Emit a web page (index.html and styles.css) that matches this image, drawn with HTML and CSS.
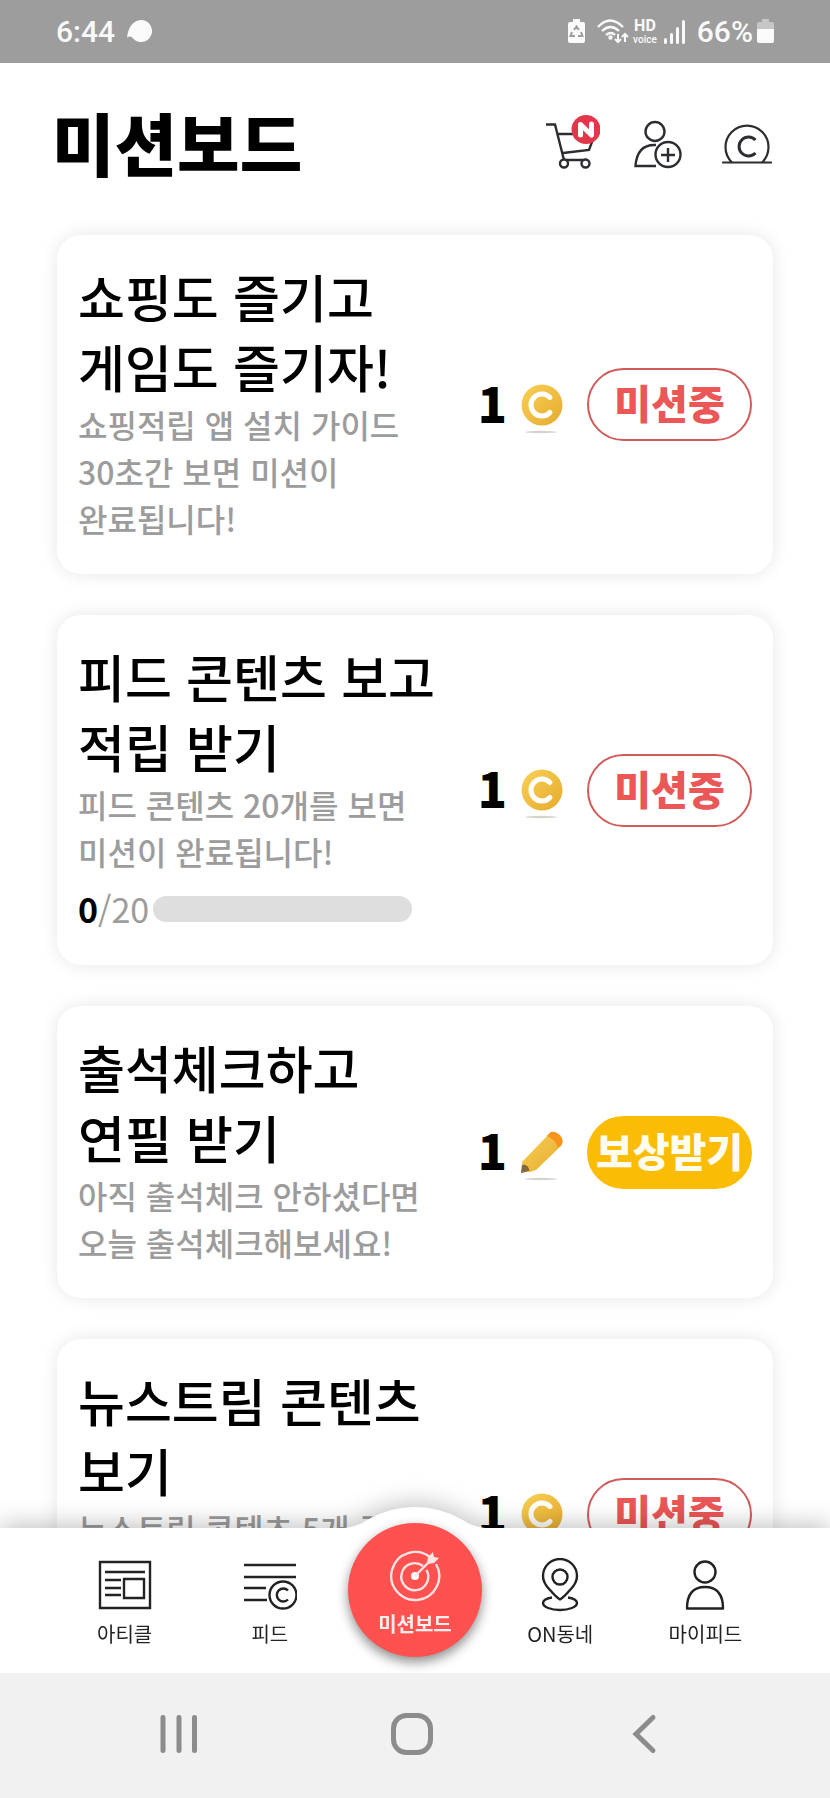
FILE: index.html
```html
<!DOCTYPE html>
<html lang="ko">
<head>
    <meta charset="UTF-8">
    <meta name="viewport" content="width=device-width,initial-scale=1.0">
    <title>미션보드</title>
    <link rel="stylesheet" href="styles.css">
</head>
<body>
    <!-- Shared icons -->
    <svg class="defs" width="0" height="0" aria-hidden="true">
        <defs>
            <linearGradient id="gold" x1="0" y1="0" x2="1" y2="1">
                <stop offset="0" stop-color="#f8d055"/>
                <stop offset="1" stop-color="#e6ab2e"/>
            </linearGradient>
        </defs>
        <symbol id="coin" viewBox="0 -8 42 58">
            <circle cx="21" cy="21" r="20.5" fill="url(#gold)"/>
            <path d="M29 13.500a11 11 0 1 0 0 15" fill="none" stroke="#fff" stroke-width="5" stroke-linecap="round"/>
            <ellipse cx="20" cy="48" rx="16" ry="1.200" fill="#d6d3cd"/>
        </symbol>
        <symbol id="pencil" viewBox="0 -8 42 58">
            <path d="M1 31 28 3 41 14 15 39 9 41 1 41Z" fill="url(#gold)"/>
            <path d="M26 5 29 1.500Q33-1 39 4 43 9 41 13L37 17Q34 8 26 5Z" fill="#f7941e"/>
            <path d="M1 34Q7 33 8.500 39.500L1 42Q0 42 0 41Z" fill="#85683c"/>
            <ellipse cx="20" cy="48" rx="16" ry="1.200" fill="#d6d3cd"/>
        </symbol>
    </svg>

    <div class="status-bar">
        <div class="status-group">
            <span>6:44</span>
            <svg width="25" height="23" viewBox="0 0 25 23"><path d="M14 0a11 11 0 1 1-8 18.500Q4 15 0 17.500 2 1 14 0Z" fill="#fafafa"/></svg>
        </div>
        <div class="status-group">
            <svg width="17" height="25" viewBox="0 0 17 25">
                <path d="M5 0h7v3h3q2 0 2 2v17q0 2-2 2H2q-2 0-2-2V5q0-2 2-2h3Z" fill="#fafafa"/>
                <path d="m6 11 2.500-3.500L11 11M4 13l-1.500 4H7M13 13l1.500 4H10" fill="none" stroke="#9d9d9d" stroke-width="2"/>
            </svg>
            <svg width="32" height="25" viewBox="0 0 32 25" fill="none" stroke="#fafafa" stroke-width="2.400">
                <path d="M1 8q12-13 25 0M5 12q8.500-8 17 0M9 16q5-4 9 0"/>
                <circle cx="13.500" cy="18.500" r="1" />
                <path d="M21 15v8m-3-3 3 3 3-3M28 23v-8m-3 3 3-3 3 3" stroke-width="2"/>
            </svg>
            <span class="hd"><b>HD</b><small>voice</small></span>
            <svg class="signal" width="21" height="24" viewBox="0 0 21 24" stroke="#fafafa" stroke-width="3" stroke-linecap="round"><path d="M1.500 19.500v3M7.500 14.500v8M13.500 8.500v14M19.500 1.500v21"/></svg>
            <span class="percent">66%</span>
            <svg width="17" height="25" viewBox="0 0 17 25">
                <path d="M5 0h7v3h3q2 0 2 2v6H0V5q0-2 2-2h3Z" fill="#c6c6c6"/>
                <path d="M0 10h17v12q0 2-2 2H2q-2 0-2-2Z" fill="#fafafa"/>
            </svg>
        </div>
    </div>

    <header class="header">
        <h1>미션보드</h1>
        <div class="header-actions">
            <button type="button" aria-label="장바구니">
                <svg width="54" height="54" viewBox="0 0 54 54" fill="none" stroke="#2b2d31" stroke-width="2.400">
                    <path d="M0 9.500h9L18 45h23M12 19h33M17 38l26-3 6-16"/>
                    <circle cx="18" cy="48.500" r="4" fill="#fff"/>
                    <circle cx="39.500" cy="48.500" r="4" fill="#fff"/>
                    <circle cx="40" cy="14.500" r="14.500" fill="#e2374a" stroke="none"/>
                    <path d="M34.500 20V9.500l11 10.500V9" stroke="#fff" stroke-width="5" stroke-linecap="round" stroke-linejoin="round"/>
                </svg>
            </button>
            <button type="button" aria-label="친구 추가">
                <svg width="54" height="54" viewBox="0 0 54 54" fill="none" stroke="#2b2d31" stroke-width="2.400">
                    <circle cx="21" cy="16.500" r="9.500"/>
                    <path d="M22 30Q3 29 1.500 51H22"/>
                    <circle cx="34" cy="39.500" r="12.500"/>
                    <path d="M34 33v14M27 40h14"/>
                </svg>
            </button>
            <button type="button" aria-label="내 코인">
                <svg width="50" height="54" viewBox="0 0 50 54" fill="none" stroke="#2b2d31" stroke-width="2.200">
                    <path d="M10 47.500a21.500 21.500 0 1 1 30 0M1 47.500h48" stroke-linecap="round"/>
                    <path d="M33.500 25a9.500 9.500 0 1 0 0 13" stroke-width="3"/>
                </svg>
            </button>
        </div>
    </header>

    <main class="missions">
        <article class="card">
            <div class="card-text">
                <h2>쇼핑도 즐기고<br>게임도 즐기자!</h2>
                <p>쇼핑적립 앱 설치 가이드<br>30초간 보면 미션이<br>완료됩니다!</p>
            </div>
            <div class="reward">
                <strong>1</strong>
                <svg width="42" height="58"><use href="#coin"/></svg>
                <button type="button" class="pill">미션중</button>
            </div>
        </article>

        <article class="card">
            <div class="card-text">
                <h2>피드 콘텐츠 보고<br>적립 받기</h2>
                <p>피드 콘텐츠 20개를 보면<br>미션이 완료됩니다!</p>
                <div class="progress">
                    <span><b>0</b>/20</span>
                    <div class="progress-bar" role="progressbar" aria-label="진행률" aria-valuenow="0" aria-valuemin="0" aria-valuemax="20"></div>
                </div>
            </div>
            <div class="reward">
                <strong>1</strong>
                <svg width="42" height="58"><use href="#coin"/></svg>
                <button type="button" class="pill">미션중</button>
            </div>
        </article>

        <article class="card">
            <div class="card-text">
                <h2>출석체크하고<br>연필 받기</h2>
                <p>아직 출석체크 안하셨다면<br>오늘 출석체크해보세요!</p>
            </div>
            <div class="reward">
                <strong>1</strong>
                <svg width="42" height="58"><use href="#pencil"/></svg>
                <button type="button" class="pill pill-done">보상받기</button>
            </div>
        </article>

        <article class="card">
            <div class="card-text">
                <h2>뉴스트림 콘텐츠<br>보기</h2>
                <p>뉴스트림 콘텐츠 5개 꾹<br>보면 완료됩니다!</p>
                <div class="progress">
                    <span><b>0</b>/5</span>
                    <div class="progress-bar" role="progressbar" aria-label="진행률" aria-valuenow="0" aria-valuemin="0" aria-valuemax="5"></div>
                </div>
            </div>
            <div class="reward">
                <strong>1</strong>
                <svg width="42" height="58"><use href="#coin"/></svg>
                <button type="button" class="pill">미션중</button>
            </div>
        </article>
    </main>

    <nav class="tab-bar">
        <svg class="bump" width="180" height="60" viewBox="0 0 180 60"><path d="M0 60V21h20Q32 20 44 12 66 0 90 0t46 12Q148 20 160 21h20v39Z" fill="#fff"/></svg>
        <a href="#article">
            <svg width="54" height="54" viewBox="0 0 54 54" fill="none" stroke="#222" stroke-width="2.400">
                <path d="M2 4h50v46H2ZM7 14h40M7 22h16M7 30h16M7 37h16" />
                <path d="M26 21h20v19H26Z"/>
            </svg>
            <span>아티클</span>
        </a>
        <a href="#feed">
            <svg width="54" height="54" viewBox="0 0 54 54" fill="none" stroke="#222" stroke-width="2.400">
                <path d="M1 7h52M1 19h52M1 30h22M1 42h23"/>
                <circle cx="40" cy="37" r="13.500"/>
                <path d="M45 32.500a6.500 6.500 0 1 0 0 9"/>
            </svg>
            <span>피드</span>
        </a>
        <a href="#mission" class="tab-active" aria-current="page">
            <svg width="54" height="54" viewBox="0 0 54 54" fill="none" stroke="#ffe4e4" stroke-width="2.400">
                <path d="M42.500 9.500A24 24 0 1 0 48 16"/>
                <path d="M35 18A13.500 13.500 0 1 0 38.500 22"/>
                <circle cx="27" cy="28" r="4" fill="#fff" stroke="none"/>
                <path d="M27 28 42 13"/>
                <path d="m39 15 1-6 5-5 1 5 5 1-5 5-6 1Z" fill="#ffe4e4" stroke="none"/>
            </svg>
            <span>미션보드</span>
        </a>
        <a href="#town">
            <svg width="54" height="54" viewBox="0 0 54 54" fill="none" stroke="#222" stroke-width="2.400">
                <path d="M27 41.500Q24 40 17 32 10 25 10 18a17 17 0 0 1 34 0q0 7-7 14-7 8-10 9.500Z"/>
                <circle cx="27" cy="19" r="7.500"/>
                <path d="M19 39.500c-6 1-9 3-9 5.500 0 4 8 7 17 7s17-3 17-7c0-2.500-3-4.500-9-5.500"/>
            </svg>
            <span>ON동네</span>
        </a>
        <a href="#my">
            <svg width="54" height="54" viewBox="0 0 54 54" fill="none" stroke="#222" stroke-width="2.400">
                <circle cx="27" cy="14" r="10.500"/>
                <path d="M9 50.500Q9 29 27 29t18 21.500Z" stroke-linejoin="round"/>
            </svg>
            <span>마이피드</span>
        </a>
    </nav>

    <div class="system-nav">
        <button type="button" aria-label="최근 앱">
            <svg width="42" height="42" viewBox="0 0 42 42" stroke="#8c8c8c" stroke-width="5" stroke-linecap="round"><path d="M5 4.500v33M21 4.500v33M36.500 4.500v33"/></svg>
        </button>
        <button type="button" aria-label="홈">
            <svg width="42" height="42" viewBox="0 0 42 42" fill="none" stroke="#8c8c8c" stroke-width="5"><rect x="2.500" y="2.500" width="37" height="37" rx="13"/></svg>
        </button>
        <button type="button" aria-label="뒤로">
            <svg width="42" height="42" viewBox="0 0 42 42" fill="none" stroke="#8c8c8c" stroke-width="5" stroke-linecap="round"><path d="M29 4.500 12 21l17 16.500"/></svg>
        </button>
    </div>
</body>
</html>
```

FILE: styles.css
```css
* {
    box-sizing: border-box;
}
body {
    margin: 0;
    height: 100vh;
    display: flex;
    flex-direction: column;
    overflow: hidden;
    background: #fff;
    color: #000;
    font-family: "Noto Sans CJK KR", sans-serif;
}
h1, h2, p {
    margin: 0;
}
button {
    padding: 0;
    border: none;
    background: none;
    font-family: inherit;
    cursor: pointer;
}
svg {
    display: block;
    flex-shrink: 0;
}
.defs {
    position: absolute;
}

/* Status bar */
.status-bar {
    flex-shrink: 0;
    display: flex;
    justify-content: space-between;
    align-items: center;
    height: 63px;
    padding: 0 56px;
    background: #9d9d9d;
    color: #fafafa;
    font-family: Roboto, sans-serif;
    font-size: 30px;
    font-weight: 500;
}
.status-group {
    display: flex;
    align-items: center;
    gap: 12px;
}
.status-group .hd {
    display: flex;
    flex-direction: column;
    align-items: center;
    margin-left: -8px;
}
.hd b {
    font-size: 16px;
    line-height: 16px;
}
.hd small {
    font-size: 10px;
    line-height: 12px;
}
.status-group .signal {
    margin-left: -5px;
}
.status-group .percent {
    margin-right: -8px;
}

/* Page header */
.header {
    flex-shrink: 0;
    display: flex;
    justify-content: space-between;
    align-items: center;
    padding: 29px 58px 43px 52px;
}
.header h1 {
    font-size: 68px;
    line-height: 100px;
    font-weight: 900;
}
.header-actions {
    display: flex;
    gap: 34px;
}

/* Mission cards */
.missions {
    flex: 1;
    min-height: 0;
    display: flex;
    flex-direction: column;
    gap: 41px;
    padding: 0 57px;
}
.card {
    flex-shrink: 0;
    display: flex;
    justify-content: space-between;
    align-items: center;
    padding: 0 21px;
    border-radius: 24px;
    background: #fff;
    box-shadow: 0 0 18px rgba(0, 0, 0, 0.1);
}
.card-text {
    padding: 26px 0 32px;
}
.card h2 {
    font-size: 51px;
    line-height: 70px;
    font-weight: 500;
    white-space: nowrap;
}
.card p {
    font-size: 32px;
    line-height: 47px;
    font-weight: 500;
    color: #9c9c9c;
    white-space: nowrap;
}
.progress {
    display: flex;
    align-items: center;
    gap: 4px;
    width: 334px;
    height: 58px;
    padding-top: 10px;
    font-size: 34px;
    line-height: 48px;
    color: #9c9c9c;
}
.progress b {
    color: #000;
}
.progress-bar {
    flex: 1;
    height: 26px;
    border-radius: 13px;
    background: #dedede;
}
.reward {
    display: flex;
    align-items: center;
    gap: 24px;
}
.reward strong {
    margin-right: -10px;
    padding-bottom: 6px;
    font-size: 48px;
    line-height: 64px;
    font-weight: 900;
}
.pill {
    width: 165px;
    height: 73px;
    padding-bottom: 5px;
    border: 2px solid #d05c5a;
    border-radius: 37px;
    color: #eb5757;
    font-size: 40px;
    line-height: 60px;
    font-weight: 900;
    white-space: nowrap;
}
.pill-done {
    border-color: #fbbc05;
    background: #fbbc05;
    color: #fffdf0;
}

/* Bottom tabs */
.tab-bar {
    position: relative;
    flex-shrink: 0;
    display: grid;
    grid-template-columns: repeat(5, 1fr);
    height: 145px;
    padding: 0 52px;
    background: #fff;
    filter: drop-shadow(0 -3px 12px rgba(0, 0, 0, 0.25));
}
.tab-bar a {
    position: relative;
    display: flex;
    flex-direction: column;
    align-items: center;
    gap: 7px;
    padding-top: 30px;
    color: #222;
    font-size: 20px;
    line-height: 30px;
    text-decoration: none;
}
.bump {
    position: absolute;
    top: -21px;
    left: 50%;
    margin-left: -90px;
}
.tab-bar .tab-active {
    justify-self: center;
    width: 134px;
    height: 134px;
    margin-top: -5px;
    padding-top: 25px;
    border-radius: 50%;
    background: #ff5150;
    box-shadow: 0 5px 12px rgba(0, 0, 0, 0.45);
    color: #ffecec;
    font-weight: 700;
}

/* Android navigation */
.system-nav {
    position: relative;
    flex-shrink: 0;
    display: flex;
    justify-content: space-around;
    align-items: center;
    height: 125px;
    padding: 0 68px 4px 62px;
    background: #f1f1f1;
}
```
